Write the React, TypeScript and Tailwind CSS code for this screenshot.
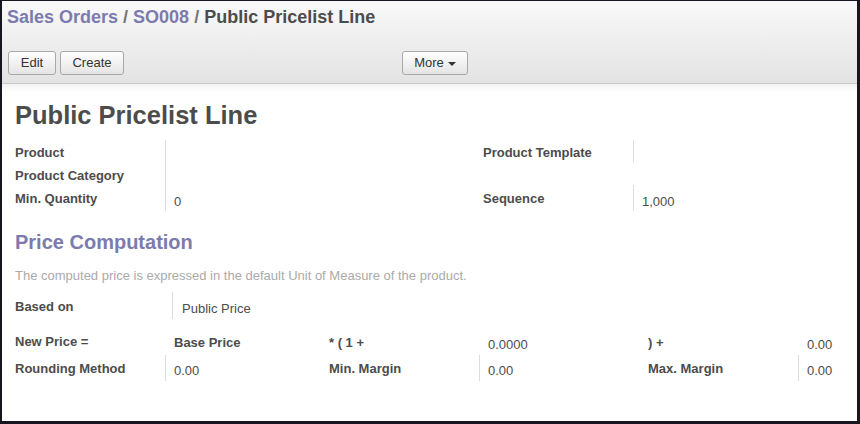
const font = { fontFamily: '"Liberation Sans", Arial, sans-serif' };

function Sep({ className = '' }: { className?: string }) {
  return <div className={`w-px bg-[#dddddd] self-stretch ${className}`} />;
}

function Label({ children }: { children: React.ReactNode }) {
  return <span className="text-[13px] font-bold leading-[18px] text-[#4c4c4c]">{children}</span>;
}

function Value({ children }: { children: React.ReactNode }) {
  return <span className="text-[13px] leading-[18px] text-[#4c4c4c]">{children}</span>;
}

function Button({ children, className = '' }: { children: React.ReactNode; className?: string }) {
  return (
    <button
      className={`flex h-[24px] items-center justify-center rounded-[3px] border border-[#a9a9a9] bg-gradient-to-b from-white to-[#e4e4e4] text-[13px] text-[#333333] shadow-[inset_0_1px_0_rgba(255,255,255,0.4)] ${className}`}
    >
      {children}
    </button>
  );
}

export default function App() {
  return (
    <div className="h-[424px] w-[860px] bg-[#17161f] pl-[2px] pt-[1px]" style={font}>
      <div className="h-[420px] w-[855px] overflow-hidden bg-white">
        {/* control panel */}
        <div className="h-[83px] border-b border-[#cacaca] bg-gradient-to-b from-[#f9f9f9] to-[#e3e3e3] px-[6px]">
          <div className="-ml-px pt-[4px] text-[18px] font-bold leading-[24px]">
            <span className="text-[#7c7bad]">Sales Orders</span>
            <span className="text-[#777777]"> / </span>
            <span className="text-[#7c7bad]">SO008</span>
            <span className="text-[#777777]"> / </span>
            <span className="text-[#4c4c4c]">Public Pricelist Line</span>
          </div>
          <div className="mt-[22px] flex">
            <Button className="w-[48px]">Edit</Button>
            <Button className="ml-[4px] w-[64px]">Create</Button>
            <Button className="ml-[278px] w-[66px] gap-[4px]">
              More
              <span className="mt-[1px] h-0 w-0 border-x-[4px] border-t-[4px] border-x-transparent border-t-[#333333]" />
            </Button>
          </div>
        </div>
        <div className="h-[8px] bg-gradient-to-b from-[#f3f3f3] to-white" />

        <div className="pl-[13px] pr-[14px]">
          <h1 className="mt-[7px] text-[25.5px] font-bold leading-[32px] text-[#4c4c4c]">Public Pricelist Line</h1>

          {/* main fields */}
          <div className="mt-[9px] flex">
            <div className="flex w-[468px]">
              <div className="flex w-[150px] flex-col">
                <div className="h-[22px]"><Label>Product</Label></div>
                <div className="h-[23px] pt-[1px]"><Label>Product Category</Label></div>
                <div className="h-[26px] pt-[1px]"><Label>Min. Quantity</Label></div>
              </div>
              <Sep />
              <div className="flex flex-col pl-[8px]">
                <div className="h-[22px]" />
                <div className="h-[23px]" />
                <div className="h-[26px] pt-[4px]"><Value>0</Value></div>
              </div>
            </div>
            <div className="flex flex-col">
              <div className="flex h-[22px]">
                <div className="w-[150px]"><Label>Product Template</Label></div>
                <Sep />
              </div>
              <div className="h-[23px]" />
              <div className="flex h-[26px]">
                <div className="w-[150px] pt-[1px]"><Label>Sequence</Label></div>
                <Sep />
                <div className="pl-[8px] pt-[4px]"><Value>1,000</Value></div>
              </div>
            </div>
          </div>

          <h2 className="mt-[18px] text-[20px] font-bold leading-[26px] text-[#7c7bad]">Price Computation</h2>
          <p className="mt-[12px] text-[13px] leading-[18px] text-[#aaaaaa]">
            The computed price is expressed in the default Unit of Measure of the product.
          </p>

          <div className="mt-[7px] flex h-[27px]">
            <div className="w-[157px] pt-[2px]"><Label>Based on</Label></div>
            <Sep />
            <div className="pl-[9px] pt-[4px]"><Value>Public Price</Value></div>
          </div>

          <div className="mt-[8px] flex h-[26px]">
            <div className="w-[159px] pt-[2px]"><Label>New Price =</Label></div>
            <div className="w-[155px] pt-[3px]"><Label>Base Price</Label></div>
            <div className="w-[159px] pt-[3px]"><Label>* ( 1 +</Label></div>
            <div className="w-[160px] pt-[5px]"><Value>0.0000</Value></div>
            <div className="w-[159px] pt-[3px]"><Label>) +</Label></div>
            <div className="pt-[5px]"><Value>0.00</Value></div>
          </div>

          <div className="mt-[2px] flex h-[26px]">
            <div className="w-[150px] pt-[1px]"><Label>Rounding Method</Label></div>
            <Sep />
            <div className="w-[163px] pl-[8px] pt-[3px]"><Value>0.00</Value></div>
            <div className="w-[150px] pt-[1px]"><Label>Min. Margin</Label></div>
            <Sep />
            <div className="w-[168px] pl-[8px] pt-[3px]"><Value>0.00</Value></div>
            <div className="w-[150px] pt-[1px]"><Label>Max. Margin</Label></div>
            <Sep />
            <div className="pl-[8px] pt-[3px]"><Value>0.00</Value></div>
          </div>
        </div>
      </div>
    </div>
  );
}
